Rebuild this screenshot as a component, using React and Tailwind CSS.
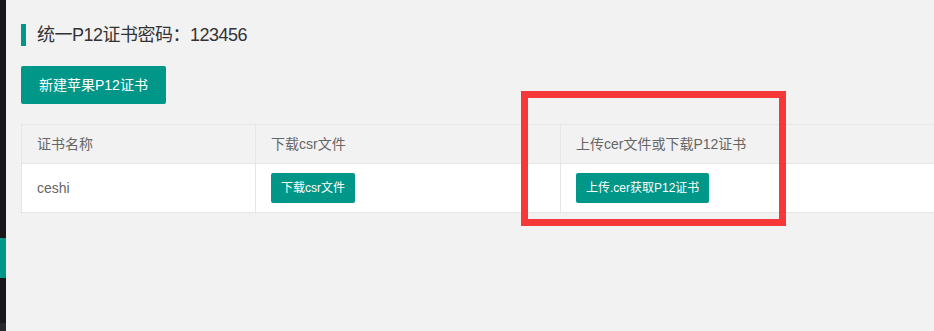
export default function App() {
  const font = { fontFamily: '"Liberation Sans", Arial, "Noto Sans CJK SC", sans-serif' };
  return (
    <div className="relative flex h-[331px] w-[934px] overflow-hidden bg-[#f2f2f2]" style={font}>
      {/* 左侧导航的边缘 */}
      <div className="flex w-[6px] shrink-0 flex-col bg-[#17181c]">
        <div className="h-[238px]" />
        <div className="h-[40px] bg-[#009688]" />
        <div className="h-[45px]" />
        <div className="flex-1 bg-[#26272c]" />
      </div>

      <div className="flex-1 pl-[15px]">
        <div className="mt-[24px] border-l-[5px] border-[#009688] pl-[11px] text-[18px] leading-[22px] tracking-[-0.5px] text-[#333]">
          统一P12证书密码：123456
        </div>

        <button
          type="button"
          className="mt-[20px] h-[38px] rounded-[2px] bg-[#009688] px-[18px] text-[14px] text-white"
        >
          新建苹果P12证书
        </button>

        <table className="mt-[20px] w-[1200px] border-collapse text-[14px] text-[#666]">
          <thead>
            <tr className="bg-[#f2f2f2]">
              <th className="h-[39px] w-[234px] border border-[#e6e6e6] px-[15px] text-left font-normal">证书名称</th>
              <th className="w-[305px] border border-[#e6e6e6] px-[15px] text-left font-normal">下载csr文件</th>
              <th className="border border-[#e6e6e6] px-[15px] text-left font-normal">上传cer文件或下载P12证书</th>
            </tr>
          </thead>
          <tbody>
            <tr className="bg-white">
              <td className="h-[49px] border border-[#e6e6e6] px-[15px]">ceshi</td>
              <td className="border border-[#e6e6e6] px-[15px]">
                <button type="button" className="h-[30px] rounded-[2px] bg-[#009688] px-[10px] text-[12px] text-white">
                  下载csr文件
                </button>
              </td>
              <td className="border border-[#e6e6e6] px-[15px]">
                <button type="button" className="h-[30px] rounded-[2px] bg-[#009688] px-[10px] text-[12px] text-white">
                  上传.cer获取P12证书
                </button>
              </td>
            </tr>
          </tbody>
        </table>
      </div>

      {/* 红色标注框 */}
      <div className="pointer-events-none absolute left-[521px] top-[91px] h-[135px] w-[265px] border-[7px] border-[#f73838]" />
    </div>
  );
}
